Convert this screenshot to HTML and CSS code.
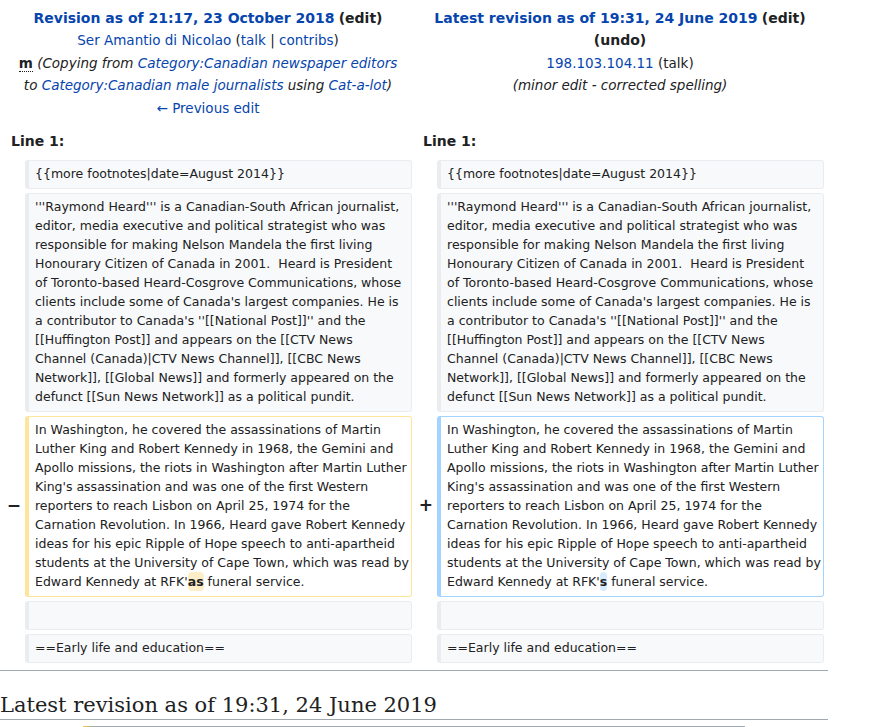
FILE: index.html
```html
<!DOCTYPE html>
<html lang="en">
<head>
<meta charset="utf-8">
<title>Raymond Heard: Difference between revisions</title>
<link rel="stylesheet" href="styles.css">
</head>
<body>
<div class="page">
  <table class="diff">
    <colgroup>
      <col class="col-marker"><col class="col-content"><col class="col-marker"><col class="col-content">
    </colgroup>
    <tr class="diff-title">
      <td colspan="2" class="diff-otitle">
        <div><a class="title-link">Revision as of 21:17, 23 October 2018</a> <span class="paren-strong">(edit)</span></div>
        <div><a>Ser Amantio di Nicolao</a> (<a>talk</a> | <a>contribs</a>)</div>
        <div class="comment"><abbr class="minor">m</abbr> <span class="summary">(Copying from <a>Category:Canadian newspaper editors</a> to <a>Category:Canadian male journalists</a> using <a>Cat-a-lot</a>)</span></div>
        <div><a>← Previous edit</a></div>
      </td>
      <td colspan="2" class="diff-ntitle">
        <div><a class="title-link">Latest revision as of 19:31, 24 June 2019</a> <span class="paren-strong">(edit)</span> <span class="paren-strong">(undo)</span></div>
        <div><a>198.103.104.11</a> <span class="plain">(talk)</span></div>
        <div class="comment"><span class="summary">(minor edit - corrected spelling)</span></div>
      </td>
    </tr>
    <tr>
      <td colspan="2" class="diff-lineno">Line 1:</td>
      <td colspan="2" class="diff-lineno">Line 1:</td>
    </tr>
    <tr>
      <td class="diff-marker"></td>
      <td class="diff-context"><div>{{more footnotes|date=August 2014}}</div></td>
      <td class="diff-marker"></td>
      <td class="diff-context"><div>{{more footnotes|date=August 2014}}</div></td>
    </tr>
    <tr>
      <td class="diff-marker"></td>
      <td class="diff-context"><div>'''Raymond Heard''' is a Canadian-South African journalist,
editor, media executive and political strategist who was
responsible for making Nelson Mandela the first living
Honourary Citizen of Canada in 2001.  Heard is President
of Toronto-based Heard-Cosgrove Communications, whose
clients include some of Canada's largest companies. He is
a contributor to Canada's ''[[National Post]]'' and the
[[Huffington Post]] and appears on the [[CTV News
Channel (Canada)|CTV News Channel]], [[CBC News
Network]], [[Global News]] and formerly appeared on the
defunct [[Sun News Network]] as a political pundit.</div></td>
      <td class="diff-marker"></td>
      <td class="diff-context"><div>'''Raymond Heard''' is a Canadian-South African journalist,
editor, media executive and political strategist who was
responsible for making Nelson Mandela the first living
Honourary Citizen of Canada in 2001.  Heard is President
of Toronto-based Heard-Cosgrove Communications, whose
clients include some of Canada's largest companies. He is
a contributor to Canada's ''[[National Post]]'' and the
[[Huffington Post]] and appears on the [[CTV News
Channel (Canada)|CTV News Channel]], [[CBC News
Network]], [[Global News]] and formerly appeared on the
defunct [[Sun News Network]] as a political pundit.</div></td>
    </tr>
    <tr>
      <td class="diff-marker minus">−</td>
      <td class="diff-deletedline"><div>In Washington, he covered the assassinations of Martin Luther King and Robert Kennedy in 1968, the Gemini and Apollo missions, the riots in Washington after Martin Luther King's assassination and was one of the first Western reporters to reach Lisbon on April 25, 1974 for the Carnation Revolution. In 1966, Heard gave Robert Kennedy ideas for his epic Ripple of Hope speech to anti-apartheid students at the University of Cape Town, which was read by Edward Kennedy at RFK'<del class="diffchange">as</del> funeral service.</div></td>
      <td class="diff-marker plus">+</td>
      <td class="diff-addedline"><div>In Washington, he covered the assassinations of Martin Luther King and Robert Kennedy in 1968, the Gemini and Apollo missions, the riots in Washington after Martin Luther King's assassination and was one of the first Western reporters to reach Lisbon on April 25, 1974 for the Carnation Revolution. In 1966, Heard gave Robert Kennedy ideas for his epic Ripple of Hope speech to anti-apartheid students at the University of Cape Town, which was read by Edward Kennedy at RFK'<ins class="diffchange">s</ins> funeral service.</div></td>
    </tr>
    <tr>
      <td class="diff-marker"></td>
      <td class="diff-context"><br></td>
      <td class="diff-marker"></td>
      <td class="diff-context"><br></td>
    </tr>
    <tr>
      <td class="diff-marker"></td>
      <td class="diff-context"><div>==Early life and education==</div></td>
      <td class="diff-marker"></td>
      <td class="diff-context"><div>==Early life and education==</div></td>
    </tr>
  </table>
  <hr class="diff-hr">
  <h2 class="current-title">Latest revision as of 19:31, 24 June 2019</h2>
  <div class="ambox"></div>
</div>
</body>
</html>
```
FILE: styles.css
```css
html, body {
  margin: 0;
  padding: 0;
  background: #ffffff;
}

body {
  font-family: "DejaVu Sans", sans-serif;
  color: #202122;
}

a {
  color: #0645ad;
  text-decoration: none;
}

.page {
  width: 828px;
}

.diff {
  width: 828px;
  border-spacing: 4px;
  table-layout: fixed;
  border-collapse: separate;
}

.col-marker {
  width: 17px;
}

.col-content {
  width: 387px;
}

.diff-otitle,
.diff-ntitle {
  text-align: center;
  vertical-align: top;
  font-size: 13.5px;
  line-height: 22.4px;
  padding: 3px 6px 0;
}

.title-link,
.paren-strong {
  font-weight: bold;
  font-size: 14px;
}

.summary {
  font-style: italic;
}

.minor {
  font-weight: bold;
  text-decoration: none;
  border-bottom: 1px dotted #202122;
  cursor: help;
}

.diff-lineno {
  font-weight: bold;
  font-size: 14px;
  line-height: 22px;
  padding: 7px 0 4px 7px;
}

.diff-marker {
  text-align: right;
  vertical-align: middle;
  font-weight: bold;
  font-size: 17px;
  line-height: 1;
  padding: 0 0 2px;
}

.diff-context,
.diff-deletedline,
.diff-addedline {
  font-size: 12.5px;
  line-height: 19px;
  padding: 3px 2px 5px 6px;
  vertical-align: top;
  white-space: pre-wrap;
  overflow-wrap: break-word;
  border: 1px solid #eaecf0;
  border-left-width: 4px;
  border-radius: 3px;
}

.diff-context {
  background: #f8f9fa;
  color: #202122;
}

.diff-deletedline {
  border-color: #ffe49c;
  background: #ffffff;
}

.diff-addedline {
  border-color: #a3d3ff;
  background: #ffffff;
}

.diffchange {
  font-weight: bold;
  text-decoration: none;
  border-radius: 4px;
  padding: 2px 0;
}

del.diffchange {
  background: #feeec8;
}

ins.diffchange {
  background: #d8ecff;
}

.diff-hr {
  border: 0;
  border-top: 1px solid #a2a9b1;
  height: 0;
  margin: 3px 0 0;
}

.current-title {
  font-family: "DejaVu Serif", serif;
  font-weight: normal;
  font-size: 21px;
  line-height: 1.3;
  margin: 21px 0 0;
  padding: 0;
  border-bottom: 1px solid #a2a9b1;
}

.ambox {
  margin: 6px 10% 0;
  height: 40px;
  border: 1px solid #a2a9b1;
  border-left: 10px solid #fc3;
}
```
